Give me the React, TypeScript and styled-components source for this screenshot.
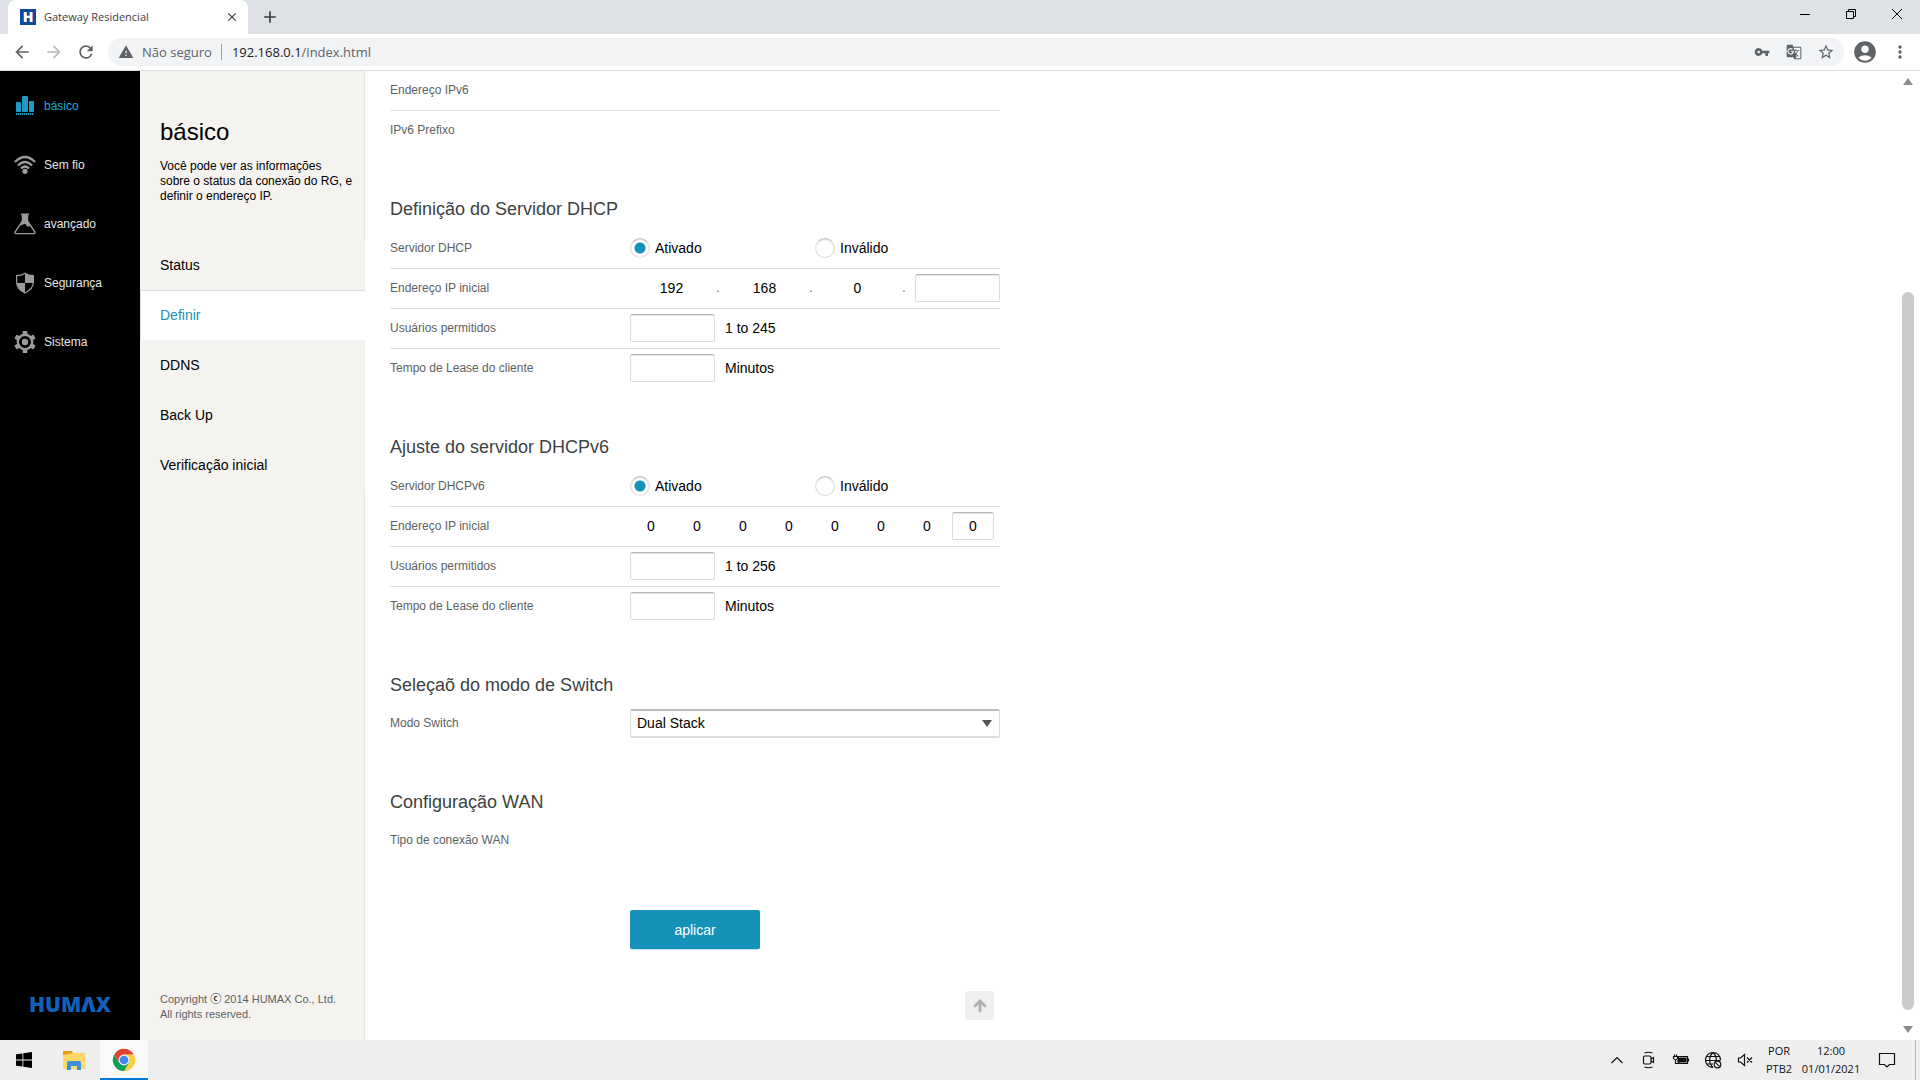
import React, { useState } from "react";
import styled, { createGlobalStyle } from "styled-components";
import {
  MdAccountCircle,
  MdAdd,
  MdArrowBack,
  MdArrowForward,
  MdClose,
  MdGTranslate,
  MdMoreVert,
  MdRefresh,
  MdStarBorder,
  MdVpnKey,
  MdWarning,
} from "react-icons/md";

const pageFont = '"Liberation Sans", Arial, sans-serif';
const systemFont = '"Open Sans", "Noto Sans", sans-serif';
const teal = "#1592ba";

const GlobalStyle = createGlobalStyle`
  *, *::before, *::after { box-sizing: border-box; }
  body { margin: 0; background: #fff; font-family: ${pageFont}; }
  button, input, select { font: inherit; color: inherit; }
  button { padding: 0; border: 0; background: none; cursor: pointer; }
  a { color: inherit; text-decoration: none; }
  h1, h2, p, ul { margin: 0; padding: 0; font-weight: normal; }
  ul { list-style: none; }
`;

const Screen = styled.div`
  display: flex;
  flex-direction: column;
  height: 100vh;
  overflow: hidden;
`;

/* ---------- browser frame ---------- */

const TabStrip = styled.header`
  display: flex;
  flex: none;
  height: 34px;
  padding-left: 8px;
  background: #dee1e6;
  color: #3c4043;
  font: 11px ${systemFont};
`;

const Tab = styled.div`
  display: flex;
  align-items: center;
  gap: 8px;
  width: 240px;
  padding: 0 8px 0 12px;
  border-radius: 8px 8px 0 0;
  background: #fff;
`;

const Favicon = styled.span`
  display: grid;
  place-items: center;
  width: 16px;
  height: 16px;
  background: #0c4aa0;
  color: #fff;
  font: 800 14px/16px ${systemFont};
`;

const TabTitle = styled.span`
  flex: 1;
  padding-bottom: 2px;
  white-space: nowrap;
`;

const IconButton = styled.button<{ $size?: number; $color?: string }>`
  display: grid;
  flex: none;
  place-items: center;
  width: ${(p) => p.$size ?? 28}px;
  height: ${(p) => p.$size ?? 28}px;
  color: ${(p) => p.$color ?? "#5f6368"};
`;

const NewTab = styled(IconButton)`
  margin: 3px 0 0 8px;
`;

const WindowControls = styled.div`
  display: flex;
  margin-left: auto;
  color: #000;
`;

const WindowButton = styled.button`
  display: grid;
  place-items: center;
  width: 46px;
  height: 28px;
`;

const Toolbar = styled.nav`
  display: flex;
  flex: none;
  align-items: center;
  gap: 4px;
  height: 37px;
  padding: 0 6px 0 8px;
  border-bottom: 1px solid #dadce0;
  background: #fff;
`;

const Omnibox = styled.div`
  display: flex;
  flex: 1;
  align-items: center;
  height: 28px;
  margin-left: 4px;
  padding: 0 4px 0 10px;
  border-radius: 14px;
  background: #f1f3f4;
  color: #5f6368;
  font: 13px ${systemFont};
`;

const Security = styled.button`
  display: flex;
  align-items: center;
  gap: 8px;
  padding-right: 9px;
  border-right: 1px solid #9aa0a6;
  line-height: 16px;
`;

const Address = styled.div`
  flex: 1;
  padding-left: 10px;
  outline: none;
`;

const Host = styled.span`
  color: #202124;
`;

const OmniboxActions = styled.div`
  display: flex;
  gap: 4px;
`;

/* ---------- gateway page ---------- */

const Viewport = styled.div`
  display: flex;
  flex: 1;
  min-height: 0;
`;

const MainNav = styled.nav`
  display: flex;
  flex: none;
  flex-direction: column;
  justify-content: space-between;
  width: 140px;
  padding: 5px 0 24px;
  background: #000;
`;

const MainLink = styled.a<{ $active?: boolean }>`
  display: flex;
  align-items: center;
  gap: 8px;
  height: 59px;
  padding-left: 14px;
  color: ${(p) => (p.$active ? "#1fa8d8" : "#e6e6e6")};
  font-size: 12px;

  svg {
    color: ${(p) => (p.$active ? "#1f9ac2" : "#9b9b9b")};
  }
`;

const Brand = styled.div`
  color: #1261b8;
  font: 800 21px/24px ${systemFont};
  text-align: center;
`;

const SubPanel = styled.aside`
  display: flex;
  flex: none;
  flex-direction: column;
  width: 225px;
  background: #f4f3ef;
`;

const Intro = styled.div`
  height: 169px;
  padding: 47px 10px 0 20px;
  border-right: 1px solid #e4e4e2;
`;

const IntroTitle = styled.h1`
  font-size: 24px;
  line-height: 28px;
`;

const IntroText = styled.p`
  margin-top: 13px;
  font-size: 12px;
  line-height: 15px;
`;

const SubLink = styled.a<{ $active?: boolean }>`
  display: block;
  height: 50px;
  padding-left: ${(p) => (p.$active ? 19 : 20)}px;
  border: solid #dcdcda;
  border-width: ${(p) => (p.$active ? "1px 0 0 1px" : "0")};
  background: ${(p) => (p.$active ? "#fff" : "transparent")};
  color: ${(p) => (p.$active ? teal : "#000")};
  font-size: 14px;
  line-height: ${(p) => (p.$active ? 48 : 50)}px;
`;

const Copyright = styled.p`
  display: flex;
  flex: 1;
  flex-direction: column;
  justify-content: flex-end;
  padding: 0 0 18px 20px;
  border-right: 1px solid #e4e4e2;
  color: #606060;
  font-size: 11px;
  line-height: 15px;
`;

const CircledC = styled.span`
  color: #333;
  font-family: "Noto Sans CJK KR", sans-serif;
  font-weight: bold;
  line-height: 1;
`;

const Content = styled.main`
  flex: 1;
  padding-left: 25px;
  overflow: hidden;
`;

const Form = styled.form`
  display: flex;
  flex-direction: column;
  width: 100%;
  max-width: 610px;
`;

const SectionTitle = styled.h2`
  margin-top: 39px;
  color: #3d4242;
  font-size: 18px;
  line-height: 40px;
`;

const Row = styled.div<{ $short?: boolean }>`
  display: grid;
  grid-template-columns: 240px 1fr;
  align-items: center;
  height: 40px;
  padding-bottom: 2px;
  border-bottom: 1px solid #d9e3e3;
  color: #000;
  font-size: 14px;

  &:last-child {
    height: ${(p) => (p.$short ? 38 : 39)}px;
    border-bottom: 0;
  }
`;

const RowLabel = styled.label`
  color: #5b6262;
  font-size: 12px;
`;

const RadioGroup = styled.div`
  display: grid;
  grid-template-columns: 1fr 1fr;
`;

const RadioLabel = styled.label`
  display: flex;
  align-items: center;
  gap: 5px;
`;

const Radio = styled.input`
  appearance: none;
  width: 20px;
  height: 20px;
  margin: 0;
  border: 1px solid #dcdcd8;
  border-top-color: #c2c2bc;
  border-radius: 50%;
  background: #fff;
  box-shadow: inset 0 1px 1px #dededa;

  &:checked {
    background: radial-gradient(circle, ${teal} 0 5px, #fff 6px);
  }
`;

const Field = styled.input<{ $width: number }>`
  width: ${(p) => p.$width}px;
  height: 28px;
  padding: 0 4px;
  border: 1px solid #dcdcd8;
  border-top-color: #b9b9b2;
  border-radius: 2px;
  background: #fff;
  box-shadow: inset 0 1px 0 #e4e4e0;
  text-align: center;
  outline: none;

  &:read-only {
    border-color: transparent;
    box-shadow: none;
  }
`;

const WithUnit = styled.div`
  display: flex;
  align-items: center;
  gap: 10px;
`;

const Ipv4 = styled.div`
  display: flex;
  align-items: center;
  justify-content: space-between;
`;

const FixedOctets = styled.div`
  display: flex;
  align-items: center;
`;

const Dot = styled.span`
  width: 10px;
  color: #5b6262;
  font-size: 12px;
  text-align: center;
`;

const Ipv6 = styled.div`
  display: flex;
  gap: 4px;
`;

const SelectBox = styled.div`
  display: grid;
  align-items: center;

  > * {
    grid-area: 1 / 1;
  }

  svg {
    justify-self: end;
    margin-right: 8px;
    pointer-events: none;
  }
`;

const Select = styled.select`
  appearance: none;
  width: 100%;
  height: 29px;
  padding: 0 24px 1px 6px;
  border: 1px solid #dcdcd8;
  border-top: 2px solid #bdbdb8;
  border-bottom-width: 2px;
  border-radius: 2px;
  background: #fff;
  outline: none;
`;

const Apply = styled.button`
  width: 130px;
  height: 40px;
  margin: 50px 0 0 240px;
  border-bottom: 1px solid #c5dde6;
  border-radius: 2px;
  background: ${teal};
  background-clip: padding-box;
  color: #fff;
  font-size: 14px;
`;

const ToTop = styled.a`
  display: grid;
  align-self: flex-end;
  place-items: center;
  width: 29px;
  height: 29px;
  margin: 41px 6px 0 0;
  border-radius: 3px;
  background: #efefef;
`;

const ScrollTrack = styled.div`
  display: flex;
  flex: none;
  flex-direction: column;
  align-items: center;
  width: 24px;
  padding: 7px 0;
`;

const ScrollThumb = styled.div`
  width: 12px;
  height: 718px;
  margin: auto 0 16px;
  border-radius: 6px;
  background: #cbcbcb;
`;

/* ---------- taskbar ---------- */

const Taskbar = styled.footer`
  display: flex;
  flex: none;
  justify-content: space-between;
  height: 40px;
  background: #eeeeee;
  color: #111;
  font: 11px/18px ${systemFont};
`;

const TaskApps = styled.div`
  display: flex;
`;

const TaskButton = styled.button<{ $active?: boolean; $width?: number }>`
  display: grid;
  place-items: center;
  width: ${(p) => p.$width ?? 48}px;
  height: 40px;
  border: solid ${(p) => (p.$active ? "#0078d7" : "transparent")};
  border-width: 2px 0;
  border-top-color: ${(p) => (p.$active ? "#f9f9f9" : "transparent")};
  background: ${(p) => (p.$active ? "#f9f9f9" : "transparent")};
`;

const Tray = styled.div`
  display: flex;
  align-items: center;
  padding-right: 4px;
`;

const TrayText = styled.button<{ $width: number }>`
  display: flex;
  flex-direction: column;
  align-items: center;
  width: ${(p) => p.$width}px;
`;

const ShowDesktop = styled.button`
  width: 1px;
  height: 40px;
  margin-left: 6px;
  background: #b9b9b9;
`;

/* ---------- drawings ---------- */

const BarsIcon = () => (
  <svg width="22" height="22" viewBox="0 0 22 22" fill="currentColor" aria-hidden="true">
    <rect x="2" y="7" width="5" height="10" rx="1" />
    <rect x="8" y="1" width="6" height="16" rx="1" />
    <rect x="15" y="6" width="5" height="11" rx="1" />
    <path d="M2 19h18" stroke="currentColor" strokeWidth="2" strokeDasharray="1.4 .6" />
  </svg>
);

const WifiIcon = () => (
  <svg width="22" height="22" viewBox="0 0 22 22" fill="none" stroke="currentColor" strokeWidth="2.4" aria-hidden="true">
    <path d="M1 8Q11 -2 21 8M4 11.500Q11 4.500 18 11.500M7 14.500Q11 10.500 15 14.500" />
    <circle cx="11" cy="17.3" r="2.6" fill="currentColor" stroke="none" />
  </svg>
);

const FlaskIcon = () => (
  <svg width="22" height="22" viewBox="0 0 22 22" fill="none" stroke="currentColor" strokeWidth="1.4" aria-hidden="true">
    <path d="M8.500 3v5L1.200 18.800q-.8 1.800 1 1.800h17.600q1.800 0 1-1.800L13.500 8V3" />
    <path d="M7 .5h8v2H7zM8.500 2.500h5V8l3.200 5-3.200.8-2.500-3-2.500 1-2 1.200 2-5z" fill="currentColor" stroke="none" />
  </svg>
);

const ShieldIcon = () => (
  <svg width="22" height="22" viewBox="0 0 22 22" aria-hidden="true">
    <path d="M11 1.200C8.500 3 5.500 3.600 2.600 3.600V10c0 5 3.400 8.600 8.400 11 5-2.400 8.400-6 8.400-11V3.600C16.500 3.600 13.500 3 11 1.200z" fill="none" stroke="currentColor" strokeWidth="1.2" />
    <path d="M11 1.200C13.500 3 16.500 3.600 19.400 3.600V8.500H11v12.500c5-2.400 8.400-6 8.400-11V3.600z" fill="none" />
    <path d="M11 1.200C13.500 3 16.500 3.600 19.400 3.600V11H11v10z" fill="none" />
    <path d="M11 11V1.200C13.500 3 16.500 3.600 19.400 3.600V11z" fill="currentColor" />
    <path d="M2.600 7.500H11V11H2.700zM11 11h4l-4 10z" fill="none" />
    <path d="M2.700 11H11v10C6.300 18.800 3.200 15.500 2.700 11z" fill="currentColor" />
  </svg>
);

const GearIcon = () => (
  <svg width="22" height="24" viewBox="0 0 22 24" aria-hidden="true">
    <g fill="currentColor">
      {[0, 60, 120, 180, 240, 300].map((turn) => (
        <rect key={turn} x="8.7" y="1" width="4.6" height="5" rx=".6" transform={`rotate(${turn} 11 12)`} />
      ))}
      <circle cx="11" cy="12" r="3.2" />
    </g>
    <circle cx="11" cy="12" r="7.2" fill="none" stroke="currentColor" strokeWidth="2.4" />
  </svg>
);

const ArrowMark = ({ up = false }: { up?: boolean }) => (
  <svg width="10" height="7" viewBox="0 0 10 7" fill="#8b8b8b" aria-hidden="true">
    <path d={up ? "M5 0l5 7H0z" : "M0 0h10L5 7z"} />
  </svg>
);

const MinimizeIcon = () => (
  <svg width="10" height="10" viewBox="0 0 10 10" stroke="currentColor" aria-hidden="true">
    <path d="M0 5.500h10" />
  </svg>
);

const RestoreIcon = () => (
  <svg width="10" height="10" viewBox="0 0 10 10" fill="none" stroke="currentColor" aria-hidden="true">
    <path d="M.5 2.500h7v7h-7zM2.500 2.500v-2h7v7h-2" />
  </svg>
);

const CloseWindowIcon = () => (
  <svg width="10" height="10" viewBox="0 0 10 10" stroke="currentColor" aria-hidden="true">
    <path d="M0 0l10 10M10 0L0 10" />
  </svg>
);

const WindowsIcon = () => (
  <svg width="16" height="16" viewBox="0 0 16 16" aria-hidden="true">
    <path d="M0 2.300l6.500-.9v6.200H0zM7.300 1.300L16 0v7.600H7.300zM0 8.400h6.500v6.200L0 13.700zM7.300 8.400H16V16l-8.700-1.200z" />
  </svg>
);

const ExplorerIcon = () => (
  <svg width="22" height="19" viewBox="0 0 22 19" aria-hidden="true">
    <path d="M0 0h9l1 2h11v16H0z" fill="#e59f12" />
    <path d="M0 4l11-2h11v16H0z" fill="#ffd767" />
    <path d="M4 19v-7q0-2 2-2h10q2 0 2 2v7h-4v-4H8v4z" fill="#3a92dc" />
  </svg>
);

const ChromeIcon = () => (
  <svg width="24" height="24" viewBox="0 0 24 24" aria-hidden="true">
    <path d="M12 6.400h9.700A11.200 11.200 0 0 1 12 23.200L16.900 14.800z" fill="#ffcd40" />
    <path d="M2.300 6.400A11.200 11.200 0 0 0 12 23.200l4.900-8.400L12 12l-4.900 2.800z" fill="#0f9d58" />
    <path d="M2.300 6.400A11.200 11.200 0 0 1 21.700 6.400H12L7.100 14.800z" fill="#db4437" />
    <circle cx="12" cy="12" r="5.400" fill="#f3f3f3" />
    <circle cx="12" cy="12" r="4.300" fill="#4285f4" />
  </svg>
);

const trayStroke = {
  viewBox: "0 0 18 18",
  width: 18,
  height: 18,
  fill: "none",
  stroke: "#111",
  strokeWidth: 1.2,
  "aria-hidden": true,
} as const;

const ChevronIcon = () => (
  <svg {...trayStroke}>
    <path d="M3.500 12L9 6.500l5.500 5.500" />
  </svg>
);

const CameraIcon = () => (
  <svg {...trayStroke}>
    <rect x="3.500" y="5" width="7.500" height="8" rx="1.500" />
    <path d="M11 8l2.500-1.500v5L11 10M4.500 2q4-1.500 8 0M4.500 16q4 1.500 8 0" />
  </svg>
);

const BatteryIcon = () => (
  <svg {...trayStroke}>
    <path d="M6.500 5.500h9v7h-9zM16.500 7.500v3" />
    <path d="M8 7h6v4H6V9z" fill="#111" />
    <path d="M1.500 5.500h4v2q-2 2.500-4 0zM2.500 3.500v2M4.500 3.500v2M3.500 9v3.500h3" />
  </svg>
);

const GlobeIcon = () => (
  <svg {...trayStroke}>
    <path d="M16.500 9A7.500 7.500 0 1 0 9 16.500M9 1.500c-4.500 4-4.500 11 0 15M9 1.500q3.300 3 3.300 7.500M2.500 5.500h13M1.500 9.500h15M2.500 13H9" />
    <circle cx="13.500" cy="13.500" r="3.300" />
    <path d="M11.300 11.300l4.400 4.400" />
  </svg>
);

const MutedIcon = () => (
  <svg {...trayStroke}>
    <path d="M2.500 7h2l4-3.500v11L4.500 11h-2zM11 6.500l5 5M16 6.500l-5 5" />
  </svg>
);

const NotificationIcon = () => (
  <svg {...trayStroke}>
    <path d="M1.500 2.500h15v11h-5L9 16l-2.500-2.500h-5z" />
  </svg>
);

/* ---------- form parts ---------- */

const ToggleRow = ({ label, name }: { label: string; name: string }) => {
  const [enabled, setEnabled] = useState(true);
  return (
    <Row>
      <RowLabel as="span" id={`${name}-label`}>{label}</RowLabel>
      <RadioGroup role="radiogroup" aria-labelledby={`${name}-label`}>
        <RadioLabel>
          <Radio type="radio" name={name} checked={enabled} onChange={() => setEnabled(true)} />
          Ativado
        </RadioLabel>
        <RadioLabel>
          <Radio type="radio" name={name} checked={!enabled} onChange={() => setEnabled(false)} />
          Inválido
        </RadioLabel>
      </RadioGroup>
    </Row>
  );
};

const UnitRow = ({ label, id, unit }: { label: string; id: string; unit: string }) => (
  <Row>
    <RowLabel htmlFor={id}>{label}</RowLabel>
    <WithUnit>
      <Field id={id} $width={85} />
      <span>{unit}</span>
    </WithUnit>
  </Row>
);

const mainLinks = [
  { label: "básico", Icon: BarsIcon },
  { label: "Sem fio", Icon: WifiIcon },
  { label: "avançado", Icon: FlaskIcon },
  { label: "Segurança", Icon: ShieldIcon },
  { label: "Sistema", Icon: GearIcon },
];

const subLinks = ["Status", "Definir", "DDNS", "Back Up", "Verificação inicial"];

export default function App() {
  return (
    <Screen>
      <GlobalStyle />

      <TabStrip>
        <Tab>
          <Favicon aria-hidden="true">H</Favicon>
          <TabTitle>Gateway Residencial</TabTitle>
          <IconButton $size={16} $color="#3c4043" aria-label="Fechar guia"><MdClose size={14} /></IconButton>
        </Tab>
        <NewTab $color="#3c4043" aria-label="Nova guia"><MdAdd size={20} /></NewTab>
        <WindowControls>
          <WindowButton aria-label="Minimizar"><MinimizeIcon /></WindowButton>
          <WindowButton aria-label="Restaurar"><RestoreIcon /></WindowButton>
          <WindowButton aria-label="Fechar"><CloseWindowIcon /></WindowButton>
        </WindowControls>
      </TabStrip>

      <Toolbar>
        <IconButton aria-label="Voltar"><MdArrowBack size={20} /></IconButton>
        <IconButton $color="#b9bbbe" aria-label="Avançar"><MdArrowForward size={20} /></IconButton>
        <IconButton aria-label="Recarregar"><MdRefresh size={20} /></IconButton>
        <Omnibox>
          <Security><MdWarning size={16} />Não seguro</Security>
          <Address role="textbox" aria-label="Endereço" tabIndex={0}>
            <Host>192.168.0.1</Host>/index.html
          </Address>
          <OmniboxActions>
            <IconButton aria-label="Senhas"><MdVpnKey size={16} /></IconButton>
            <IconButton aria-label="Traduzir"><MdGTranslate size={16} /></IconButton>
            <IconButton aria-label="Favoritos"><MdStarBorder size={18} /></IconButton>
          </OmniboxActions>
        </Omnibox>
        <IconButton $size={34} aria-label="Perfil"><MdAccountCircle size={26} /></IconButton>
        <IconButton aria-label="Menu"><MdMoreVert size={20} /></IconButton>
      </Toolbar>

      <Viewport>
        <MainNav>
          <ul>
            {mainLinks.map(({ label, Icon }, i) => (
              <li key={label}>
                <MainLink href="#" $active={i === 0}><Icon />{label}</MainLink>
              </li>
            ))}
          </ul>
          <Brand>HUMΛX</Brand>
        </MainNav>

        <SubPanel>
          <Intro>
            <IntroTitle>básico</IntroTitle>
            <IntroText>Você pode ver as informações sobre o status da conexão do RG, e definir o endereço IP.</IntroText>
          </Intro>
          <ul>
            {subLinks.map((label) => (
              <li key={label}>
                <SubLink href="#" $active={label === "Definir"}>{label}</SubLink>
              </li>
            ))}
          </ul>
          <Copyright>
            <span>Copyright <CircledC>ⓒ</CircledC> 2014 HUMAX Co., Ltd.</span>
            <span>All rights reserved.</span>
          </Copyright>
        </SubPanel>

        <Content>
          <Form onSubmit={(e) => e.preventDefault()}>
            <section>
              <Row><RowLabel as="span">Endereço IPv6</RowLabel></Row>
              <Row><RowLabel as="span">IPv6 Prefixo</RowLabel></Row>
            </section>

            <section>
              <SectionTitle>Definição do Servidor DHCP</SectionTitle>
              <ToggleRow label="Servidor DHCP" name="dhcp" />
              <Row>
                <RowLabel htmlFor="ip4-3">Endereço IP inicial</RowLabel>
                <Ipv4>
                  <FixedOctets>
                    {["192", "168", "0"].map((octet, i) => (
                      <React.Fragment key={i}>
                        <Field $width={83} readOnly value={octet} aria-label={`Octeto ${i + 1}`} />
                        <Dot>.</Dot>
                      </React.Fragment>
                    ))}
                  </FixedOctets>
                  <Field id="ip4-3" $width={85} />
                </Ipv4>
              </Row>
              <UnitRow label="Usuários permitidos" id="users4" unit="1 to 245" />
              <UnitRow label="Tempo de Lease do cliente" id="lease4" unit="Minutos" />
            </section>

            <section>
              <SectionTitle>Ajuste do servidor DHCPv6</SectionTitle>
              <ToggleRow label="Servidor DHCPv6" name="dhcpv6" />
              <Row>
                <RowLabel htmlFor="ip6-7">Endereço IP inicial</RowLabel>
                <Ipv6>
                  {[0, 1, 2, 3, 4, 5, 6].map((i) => (
                    <Field key={i} $width={42} readOnly value="0" aria-label={`Grupo ${i + 1}`} />
                  ))}
                  <Field id="ip6-7" $width={42} defaultValue="0" />
                </Ipv6>
              </Row>
              <UnitRow label="Usuários permitidos" id="users6" unit="1 to 256" />
              <UnitRow label="Tempo de Lease do cliente" id="lease6" unit="Minutos" />
            </section>

            <section>
              <SectionTitle>Seleçaõ do modo de Switch</SectionTitle>
              <Row $short>
                <RowLabel htmlFor="mode">Modo Switch</RowLabel>
                <SelectBox>
                  <Select id="mode" defaultValue="Dual Stack">
                    <option>Dual Stack</option>
                  </Select>
                  <svg width="10" height="7" viewBox="0 0 10 7" fill="#555" aria-hidden="true">
                    <path d="M0 0h10L5 7z" />
                  </svg>
                </SelectBox>
              </Row>
            </section>

            <section>
              <SectionTitle>Configuração WAN</SectionTitle>
              <Row $short><RowLabel as="span">Tipo de conexão WAN</RowLabel></Row>
            </section>

            <Apply type="submit">aplicar</Apply>
            <ToTop href="#" aria-label="Voltar ao topo">
              <svg width="14" height="14" viewBox="0 0 14 14" fill="none" stroke="#b0b0b0" strokeWidth="2.8" strokeLinecap="round" aria-hidden="true">
                <path d="M7 12V2M2 7l5-5 5 5" />
              </svg>
            </ToTop>
          </Form>
        </Content>

        <ScrollTrack>
          <ArrowMark up />
          <ScrollThumb />
          <ArrowMark />
        </ScrollTrack>
      </Viewport>

      <Taskbar>
        <TaskApps>
          <TaskButton aria-label="Iniciar"><WindowsIcon /></TaskButton>
          <TaskButton $width={52} aria-label="Explorador de Arquivos"><ExplorerIcon /></TaskButton>
          <TaskButton $active aria-label="Google Chrome"><ChromeIcon /></TaskButton>
        </TaskApps>
        <Tray>
          <TaskButton $width={32} aria-label="Mostrar ícones ocultos"><ChevronIcon /></TaskButton>
          <TaskButton $width={32} aria-label="Câmera"><CameraIcon /></TaskButton>
          <TaskButton $width={32} aria-label="Bateria"><BatteryIcon /></TaskButton>
          <TaskButton $width={32} aria-label="Rede"><GlobeIcon /></TaskButton>
          <TaskButton $width={32} aria-label="Volume"><MutedIcon /></TaskButton>
          <TrayText $width={36}><span>POR</span><span>PTB2</span></TrayText>
          <TrayText $width={68}><time>12:00</time><time>01/01/2021</time></TrayText>
          <TaskButton $width={44} aria-label="Notificações"><NotificationIcon /></TaskButton>
          <ShowDesktop aria-label="Mostrar área de trabalho" />
        </Tray>
      </Taskbar>
    </Screen>
  );
}
